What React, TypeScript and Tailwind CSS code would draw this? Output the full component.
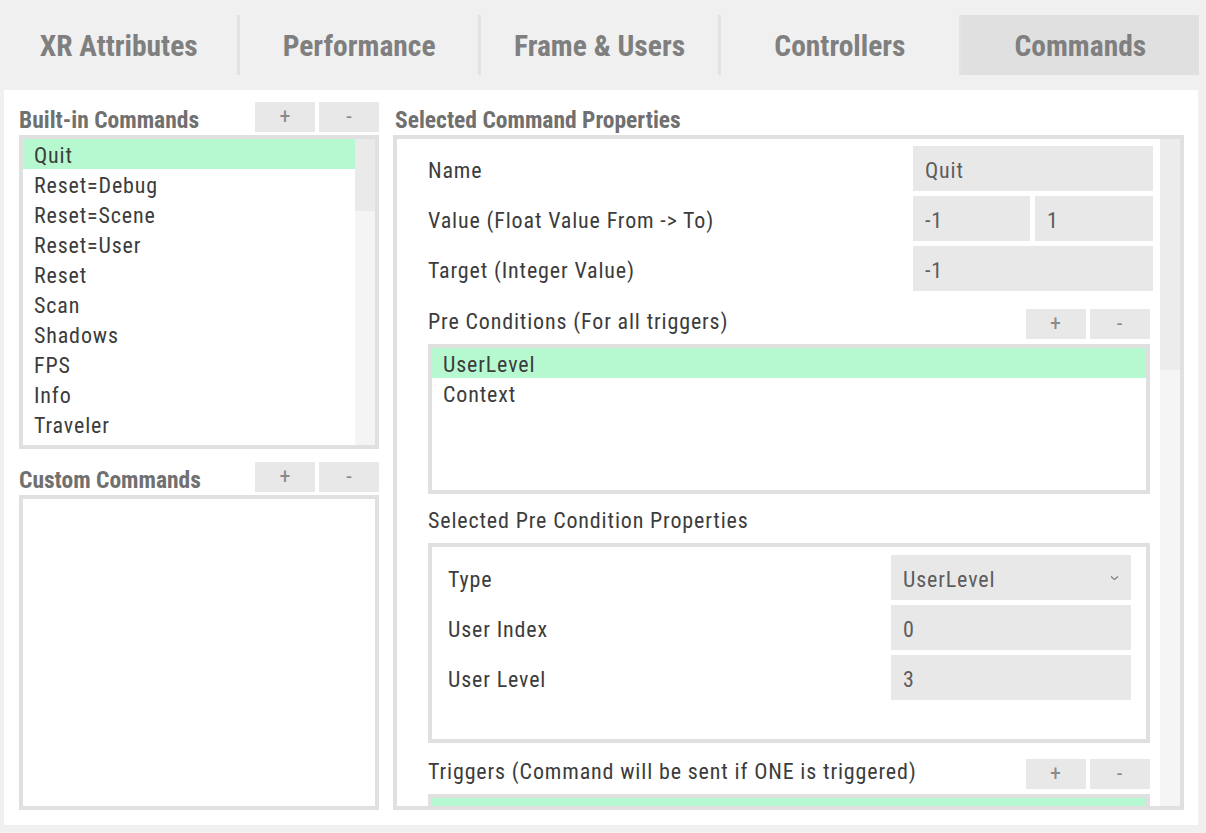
import { ReactNode } from "react";

const tabs = ["XR Attributes", "Performance", "Frame & Users", "Controllers", "Commands"];

const builtIn = [
  "Quit",
  "Reset=Debug",
  "Reset=Scene",
  "Reset=User",
  "Reset",
  "Scan",
  "Shadows",
  "FPS",
  "Info",
  "Traveler",
  "Stats",
];

function PlusMinus() {
  return (
    <div className="flex gap-[4px]">
      <button className="h-[30px] w-[60px] bg-[#e8e8e8] text-[22px] leading-none text-[#8a8a8a]">+</button>
      <button className="h-[30px] w-[60px] bg-[#e8e8e8] text-[22px] leading-none text-[#8a8a8a]">-</button>
    </div>
  );
}

function Header({ title, buttons = true }: { title: string; buttons?: boolean }) {
  return (
    <div className="flex h-[30px] items-end justify-between tracking-normal">
      <span className="text-[23.5px] font-bold leading-none text-[#707070]">{title}</span>
      {buttons && <PlusMinus />}
    </div>
  );
}

function Field({ children, className = "" }: { children?: ReactNode; className?: string }) {
  return (
    <div className={`flex h-[45px] items-center bg-[#e8e8e8] pl-[12px] pt-[3px] text-[#5c5c5c] ${className}`}>
      {children}
    </div>
  );
}

function Row({ label, children }: { label: string; children: ReactNode }) {
  return (
    <div className="flex items-center justify-between">
      <span className="mt-[3px]">{label}</span>
      {children}
    </div>
  );
}

function ItemList({ items, selected, height }: { items: string[]; selected?: string; height: string }) {
  return (
    <div className={`mr-[3px] border-4 border-[#e0e0e0] bg-white ${height} overflow-hidden`}>
      {items.map((it) => (
        <div
          key={it}
          className={`flex h-[30px] items-center pl-[11px] pt-[2px] ${it === selected ? "bg-[#b6f9d0]" : ""}`}
        >
          {it}
        </div>
      ))}
    </div>
  );
}

export default function App() {
  return (
    <div className="min-h-screen bg-[#f0f0f0] font-['Liberation_Sans_Narrow','Roboto_Condensed','Liberation_Sans',sans-serif] text-[22px] tracking-[0.85px] text-[#3c3c3c]">
      <div className="w-[1199px] pt-[15px]">
        {/* Tabs */}
        <div className="flex h-[60px]">
          {tabs.map((t, i) => (
            <div
              key={t}
              className={`flex flex-1 items-center justify-center pt-[2px] text-[29.5px] font-bold tracking-normal text-[#7f7f7f] ${
                i > 0 ? "border-l-[3px] border-[#e2e2e2]" : ""
              } ${t === "Commands" ? "bg-[#e0e0e0]" : ""}`}
            >
              {t}
            </div>
          ))}
        </div>

        {/* Panel */}
        <div className="ml-[4px] mt-[15px] flex h-[735px] w-[1194px] gap-[14px] bg-white pb-[15px] pl-[15px] pr-[14px] pt-[12px]">
          {/* Left column */}
          <div className="flex w-[360px] flex-col">
            <Header title="Built-in Commands" />
            <div className="mt-[3px] flex h-[314px] border-4 border-[#e0e0e0] bg-white">
              <div className="flex-1 overflow-hidden">
                {builtIn.map((c) => (
                  <div
                    key={c}
                    className={`flex h-[30px] items-center pl-[11px] pt-[2px] ${c === "Quit" ? "bg-[#b6f9d0]" : ""}`}
                  >
                    {c}
                  </div>
                ))}
              </div>
              <div className="w-[20px] bg-[#f4f4f4]">
                <div className="h-[72px] bg-[#eaeaea]" />
              </div>
            </div>

            <div className="mt-[13px]">
              <Header title="Custom Commands" />
            </div>
            <div className="mt-[3px] flex-1 border-4 border-[#e0e0e0] bg-white" />
          </div>

          {/* Right column */}
          <div className="flex flex-1 flex-col">
            <div className="pl-[2px]">
              <Header title="Selected Command Properties" buttons={false} />
            </div>
            <div className="mt-[3px] flex min-h-0 flex-1 border-4 border-[#e0e0e0]">
              <div className="flex-1 overflow-hidden pl-[31px] pr-[7px] pt-[7px]">
                <div className="flex flex-col gap-[5px]">
                  <Row label="Name">
                    <Field className="w-[240px]">Quit</Field>
                  </Row>
                  <Row label="Value (Float Value From -> To)">
                    <div className="flex w-[240px] gap-[5px]">
                      <Field className="w-[117px]">-1</Field>
                      <Field className="flex-1">1</Field>
                    </div>
                  </Row>
                  <Row label="Target (Integer Value)">
                    <Field className="w-[240px]">-1</Field>
                  </Row>
                </div>

                <div className="mr-[3px] mt-[18px] flex h-[30px] items-start justify-between">
                  <span className="pt-[2px] leading-[22px]">Pre Conditions (For all triggers)</span>
                  <PlusMinus />
                </div>
                <div className="mt-[5px]">
                  <ItemList items={["UserLevel", "Context"]} selected="UserLevel" height="h-[150px]" />
                </div>

                <div className="flex h-[49px] items-center pt-[3px]">Selected Pre Condition Properties</div>
                <div className="mr-[3px] h-[200px] border-4 border-[#e0e0e0] pl-[16px] pr-[15px] pt-[8px]">
                  <div className="flex flex-col gap-[5px]">
                    <Row label="Type">
                      <Field className="w-[240px] justify-between pr-[12px]">
                        <span>UserLevel</span>
                        <svg width="9" height="6" viewBox="0 0 9 6" fill="none" className="-mt-[3px]">
                          <path d="M1 1.5 L4.5 4.5 L8 1.5" stroke="#7a7a7a" strokeWidth="1.1" />
                        </svg>
                      </Field>
                    </Row>
                    <Row label="User Index">
                      <Field className="w-[240px]">0</Field>
                    </Row>
                    <Row label="User Level">
                      <Field className="w-[240px]">3</Field>
                    </Row>
                  </div>
                </div>

                <div className="mr-[3px] mt-[16px] flex h-[30px] items-start justify-between">
                  <span className="pt-[2px] leading-[22px]">Triggers (Command will be sent if ONE is triggered)</span>
                  <PlusMinus />
                </div>
                <div className="mt-[5px]">
                  <ItemList items={["Timeout"]} selected="Timeout" height="h-[150px]" />
                </div>
              </div>
              <div className="w-[20px] bg-[#f5f5f5]">
                <div className="h-[231px] bg-[#ececec]" />
              </div>
            </div>
          </div>
        </div>
      </div>
    </div>
  );
}
